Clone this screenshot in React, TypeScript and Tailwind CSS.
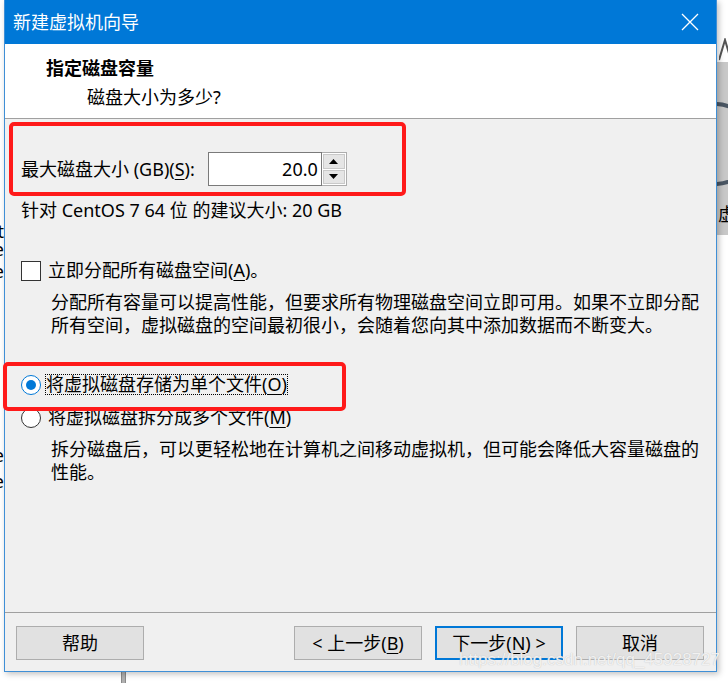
import React from "react";

const FONT = "font-['Noto_Sans','Noto_Sans_CJK_SC',sans-serif]";

function Key({ children }: { children: React.ReactNode }) {
  return <span className="underline underline-offset-[3px] decoration-1">{children}</span>;
}

function Button({
  children,
  primary,
}: {
  children: React.ReactNode;
  primary?: boolean;
}) {
  return (
    <button
      className={`w-[128px] h-[34px] bg-[#e1e1e1] text-[18px] leading-none text-black flex items-center justify-center ${
        primary ? "border-2 border-[#0078d7]" : "border border-[#adadad]"
      }`}
    >
      {children}
    </button>
  );
}

function CloseIcon() {
  return (
    <svg width="18" height="18" viewBox="0 0 18 18" fill="none">
      <path d="M1 1l16 16M17 1L1 17" stroke="white" strokeWidth="1.3" />
    </svg>
  );
}

function Radio({ checked }: { checked?: boolean }) {
  return (
    <span
      className={`w-[20px] h-[20px] rounded-full bg-white border flex items-center justify-center shrink-0 ${
        checked ? "border-[#0078d7]" : "border-[#333333]"
      }`}
    >
      {checked && <span className="w-[10px] h-[10px] rounded-full bg-[#0078d7]" />}
    </span>
  );
}

function Spinner() {
  return (
    <div className="w-[25px] h-[34px] flex flex-col border border-l-0 border-[#adadad] bg-white">
      <div className="flex-1 m-[1px] mb-0 bg-[#e5e5e5] border border-[#c9c9c9] flex items-center justify-center">
        <svg width="9" height="5" viewBox="0 0 9 5">
          <path d="M4.5 0L9 5H0z" fill="black" />
        </svg>
      </div>
      <div className="flex-1 m-[1px] bg-[#e5e5e5] border border-[#c9c9c9] flex items-center justify-center">
        <svg width="9" height="5" viewBox="0 0 9 5">
          <path d="M0 0h9L4.5 5z" fill="black" />
        </svg>
      </div>
    </div>
  );
}

export default function App() {
  return (
    <div className={`relative w-[728px] h-[683px] bg-white overflow-hidden ${FONT}`}>
      <div className="flex h-[672px]">
        {/* window behind, left edge */}
        <div className="relative w-[4px] bg-white text-[18px] text-black leading-none">
          <span className="absolute right-0 top-[222px]">t</span>
          <span className="absolute right-0 top-[240px]">e</span>
          <span className="absolute right-0 top-[262px]">e</span>
          <span className="absolute right-0 top-[446px]">e</span>
          <span className="absolute right-0 top-[472px]">e</span>
        </div>

        {/* dialog */}
        <div className="w-[713px] flex flex-col border border-t-0 border-[#3f8fd6] bg-[#f0f0f0] shadow-[2px_2px_6px_rgba(0,0,0,0.25)] z-10">
          <div className="h-[44px] bg-[#0078d7] flex items-center justify-between pl-[8px] pr-[17px]">
            <span className="text-white text-[18px] leading-none">新建虚拟机向导</span>
            <CloseIcon />
          </div>

          <div className="h-[75px] bg-white border-b border-[#a0a0a0] pt-[13px] text-[18px] leading-[23px] text-black">
            <div className="pl-[41px] font-bold">指定磁盘容量</div>
            <div className="pl-[82px] mt-[6px]">磁盘大小为多少?</div>
          </div>

          <div className="flex-1 flex flex-col pl-[16px] pt-[33px] text-[18px] leading-[23px] text-black">
            <div className="flex items-center">
              <span>
                最大磁盘大小 (GB)(<Key>S</Key>):
              </span>
              <div className="ml-[13px] flex">
                <div className="w-[114px] h-[34px] bg-white border border-[#7a7a7a] flex items-center justify-end pr-[3px]">
                  20.0
                </div>
                <Spinner />
              </div>
            </div>

            <div className="mt-[13px]">针对 CentOS 7 64 位 的建议大小: 20 GB</div>

            <div className="mt-[37px] flex items-center">
              <span className="w-[20px] h-[20px] bg-white border border-[#333333] shrink-0" />
              <span className="ml-[7px]">
                立即分配所有磁盘空间(<Key>A</Key>)。
              </span>
            </div>
            <div className="mt-[9px] pl-[30px] whitespace-nowrap">
              <div>分配所有容量可以提高性能，但要求所有物理磁盘空间立即可用。如果不立即分配</div>
              <div>所有空间，虚拟磁盘的空间最初很小，会随着您向其中添加数据而不断变大。</div>
            </div>

            <div className="mt-[37px] flex items-center">
              <Radio checked />
              <span className="ml-[4px] px-[1px] outline-1 outline-dotted outline-black -outline-offset-1 leading-[21px]">
                将虚拟磁盘存储为单个文件(<Key>O</Key>)
              </span>
            </div>
            <div className="mt-[11px] flex items-center">
              <Radio />
              <span className="ml-[7px]">
                将虚拟磁盘拆分成多个文件(<Key>M</Key>)
              </span>
            </div>
            <div className="mt-[9px] pl-[30px] whitespace-nowrap">
              <div>拆分磁盘后，可以更轻松地在计算机之间移动虚拟机，但可能会降低大容量磁盘的</div>
              <div>性能。</div>
            </div>
          </div>

          <div className="h-[59px] border-t border-[#a0a0a0] flex items-start pt-[13px] pl-[11px] pr-[12px]">
            <Button>帮助</Button>
            <div className="flex-1" />
            <div className="flex gap-[13px]">
              <Button>
                &lt; 上一步(<Key>B</Key>)
              </Button>
              <Button primary>
                下一步(<Key>N</Key>) &gt;
              </Button>
              <Button>取消</Button>
            </div>
          </div>
        </div>

        {/* window behind, right edge */}
        <div className="flex-1 flex flex-col bg-white">
          <div className="h-[62px] relative">
            <svg className="absolute left-[2px] top-[38px]" width="14" height="24" viewBox="0 0 14 24">
              <path d="M0 22L6 2l6 20" stroke="#555" strokeWidth="2" fill="none" />
            </svg>
          </div>
          <div className="h-[173px] bg-[#c8c8c8] relative overflow-hidden">
            <svg className="absolute left-[-6px] top-[40px]" width="30" height="90" viewBox="0 0 30 90">
              <path d="M4 2a40 40 0 0 1 0 80" stroke="#4a5663" strokeWidth="4" fill="none" />
            </svg>
            <span className="absolute left-[1px] top-[143px] text-[18px] leading-none text-black">虚</span>
          </div>
          <div className="flex-1" />
        </div>
      </div>

      {/* below the dialog */}
      <div className="h-[11px] flex">
        <div className="ml-[121px] w-[5px] bg-[#b0b0b0] border-x border-[#8a8a8a]" />
      </div>

      {/* red annotation boxes */}
      <div className="absolute left-[9px] top-[122px] w-[397px] h-[74px] border-[4px] border-[#ff1a1a] rounded-[5px] z-20" />
      <div className="absolute left-[3px] top-[362px] w-[343px] h-[49px] border-[4px] border-[#ff1a1a] rounded-[5px] z-20" />

      {/* watermark */}
      <span className="absolute right-[8px] top-[651px] text-[17px] leading-none text-white/80 font-['Liberation_Sans',sans-serif] [text-shadow:0_0_1px_#b0b0b0] z-20">
        https://blog.csdn.net/qq_45928727
      </span>
    </div>
  );
}
